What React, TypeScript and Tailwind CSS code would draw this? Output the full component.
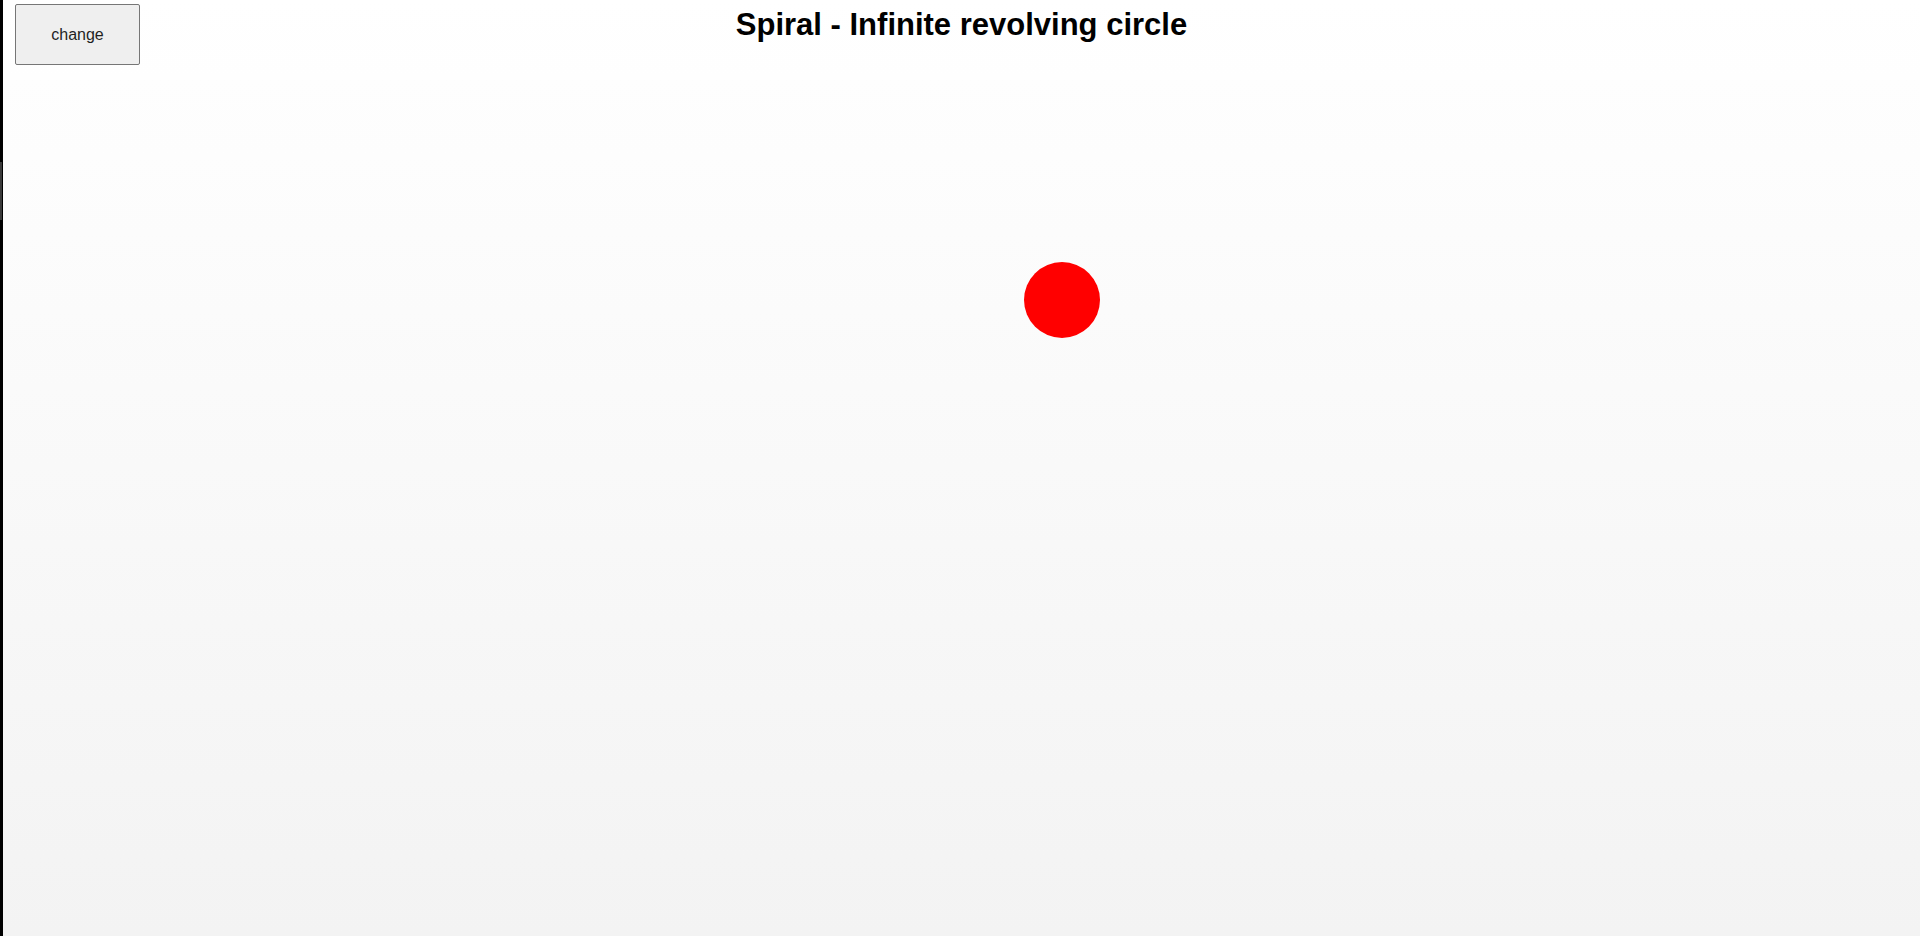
import React from "react";

const App = () => {
  return (
    <div className="flex h-screen w-full overflow-hidden bg-black font-['Liberation_Sans',Arial,sans-serif]">
      {/* left edge strip */}
      <div className="flex w-[3px] shrink-0 flex-col bg-black">
        <div className="h-[162px]" />
        <div className="h-[58px] w-[2px] bg-[#3a3a3a]" />
      </div>

      <main className="relative flex-1 bg-linear-to-b from-white to-[#f3f3f3]">
        <header className="grid grid-cols-[1fr_auto_1fr] items-start pt-1">
          <div className="pl-3">
            <button className="h-[61px] w-[125px] rounded-[2px] border border-[#767676] bg-[#efefef] text-[16px] text-[#1f1f1f]">
              change
            </button>
          </div>
          <h1 className="mt-[3px] text-[31px] font-bold leading-[36px] text-black">
            Spiral - Infinite revolving circle
          </h1>
          <div />
        </header>

        {/* revolving circle, caught at this spot of its path */}
        <div className="absolute left-[1021px] top-[262px] h-[76px] w-[76px] rounded-full bg-[#ff0000]" />
      </main>
    </div>
  );
};

export default App;
